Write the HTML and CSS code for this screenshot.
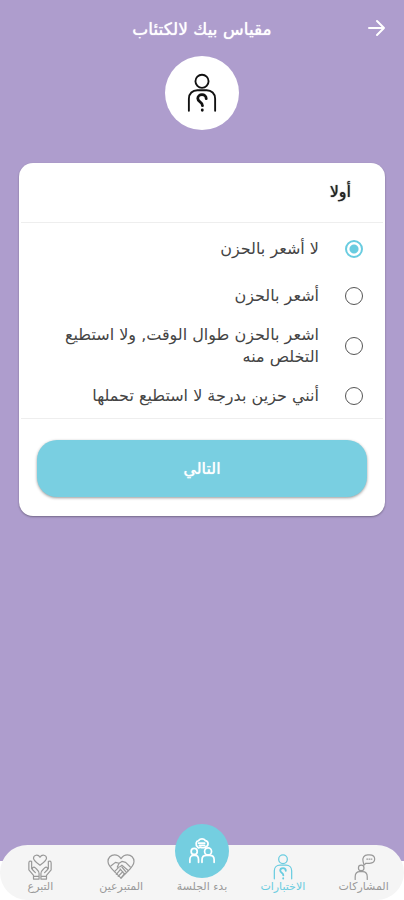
FILE: index.html
```
<!DOCTYPE html>
<html lang="ar" dir="rtl">
<head>
<meta charset="utf-8">
<meta name="viewport" content="width=device-width, initial-scale=1">
<title>مقياس بيك لالكتئاب</title>
<link rel="stylesheet" href="styles.css">
</head>
<body>
<svg class="defs" aria-hidden="true">
  <symbol id="person-question" viewBox="0 0 32 42">
    <circle cx="16" cy="8.500" r="7"/>
    <path d="M2 40V27c0-5.500 4-9 9-9h10c5 0 9 3.500 9 9v13"/>
    <path class="mark" d="M20.500 27c0-2.500-2-4.200-4.500-4.200s-4.500 1.700-4.500 4c0 4 5 3.200 5 7.700M16.300 39v.5"/>
  </symbol>
</svg>
<header class="bar">
  <button class="back" type="button" aria-label="رجوع">
    <svg viewBox="0 0 18 18"><path d="M1 9h15M9 2l7 7-7 7"/></svg>
  </button>
  <h1>مقياس بيك لالكتئاب</h1>
</header>
<main>
  <div class="avatar"><svg class="icon"><use href="#person-question"/></svg></div>
  <form class="card">
    <h2 id="question">أولا</h2>
    <div class="options" role="radiogroup" aria-labelledby="question">
      <label class="option"><input type="radio" name="answer" checked><span>لا أشعر بالحزن</span></label>
      <label class="option"><input type="radio" name="answer"><span>أشعر بالحزن</span></label>
      <label class="option"><input type="radio" name="answer"><span>اشعر بالحزن طوال الوقت, ولا استطيع التخلص منه</span></label>
      <label class="option"><input type="radio" name="answer"><span>أنني حزين بدرجة لا استطيع تحملها</span></label>
    </div>
    <div class="actions"><button class="next" type="button">التالي</button></div>
  </form>
</main>
<footer>
  <nav class="tabs">
    <a href="#posts">
      <svg class="icon" viewBox="0 0 28 28">
        <circle cx="11" cy="15" r="3"/><path d="M4.500 27.500v-3c0-3.500 2-5.500 5-5.500h3c3 0 5 2 5 5.500v3"/>
        <path d="M14 12l-1-4c-1-4 1-7 5-7h2c4 0 5.500 2 5.500 4.500S24 10 20 10h-4z"/><path d="M17 5.500h1M19.500 5.500h1M22 5.500h.5"/>
      </svg>
      <span>المشاركات</span>
    </a>
    <a href="#tests" class="active" aria-current="page">
      <svg class="icon"><use href="#person-question"/></svg>
      <span>الاختبارات</span>
    </a>
    <a href="#session">
      <span class="bubble"><svg class="icon" viewBox="0 0 30 30">
        <circle cx="6" cy="15.500" r="3.500"/><path d="M1 28v-3c0-3 2-5 4-5h2c3 0 4 2 4 5v3"/>
        <circle cx="22" cy="15.500" r="4"/><path d="M15 28v-3c0-3 2-5 5-5h4c3 0 5 2 5 5v3"/>
        <path d="M10 10.500c-3-3-2-7 1-7.500 2-2.500 6-2.500 8 0 4 1 4 6 0 7.500-2 1-4 1-6 0l-2 1z"/><path d="M11 6h7M12 8.500h6"/>
      </svg></span>
      <span>بدء الجلسة</span>
    </a>
    <a href="#donors">
      <svg class="icon" viewBox="0 0 30 28">
        <path d="M8 19C4 15 1 12 1 8c0-4 3-7 7-7 3 0 5 1 7 4 2-3 4-4 7-4 4 0 7 3 7 7 0 4-3 7-7 11l-7 7z"/>
        <path d="M4 13l5-4 4 1 3-2 4 1 5 5M13 10l-2 4c2 1 3 0 5-2l7 6M8 19l4-4M10 22l4-5M12 24l5-5M15 26l4-5M16 14l5 6M14 16l5 6"/>
      </svg>
      <span>المتبرعين</span>
    </a>
    <a href="#donate">
      <svg class="icon" viewBox="0 0 26 28">
        <path d="M13 12C9 9 6 7 6 4.500 6 1 11 0 13 3.500 15 0 20 1 20 4.500 20 7 17 9 13 12z"/>
        <path d="M4 8c-2-1-3 0-3 2v7l5 6v4h6v-6c0-3-2-4-4-6s-4 0-3 2l3 3M4 8v8M22 8c2-1 3 0 3 2v7l-5 6v4h-6v-6c0-3 2-4 4-6s4 0 3 2l-3 3M22 8v8M6 24h6M14 24h6"/>
      </svg>
      <span>التبرع</span>
    </a>
  </nav>
</footer>
</body>
</html>
```
FILE: styles.css
```
* { box-sizing: border-box; }

body {
  margin: 0;
  min-height: 100vh;
  display: flex;
  flex-direction: column;
  background: #ae9dcd;
  color: #444;
  font-family: "DejaVu Sans", sans-serif;
}

.defs { display: none; }

svg {
  fill: none;
  stroke: currentColor;
  stroke-linecap: round;
  stroke-linejoin: round;
}

button {
  border: 0;
  font: inherit;
  cursor: pointer;
}

h1,
h2,
.next {
  font-size: 16px;
  font-weight: normal;
  line-height: 24px;
  text-shadow: 0 0 1px currentColor;
}

.bar {
  display: grid;
  grid-template-columns: 54px 1fr 54px;
  align-items: center;
  height: 56px;
  color: #fff;
}

.back {
  display: grid;
  place-items: center;
  height: 48px;
  padding: 0;
  background: none;
  color: inherit;
}

.back svg {
  width: 18px;
  height: 18px;
  stroke-width: 2;
}

h1 {
  margin: 0;
  padding-top: 2px;
  font-size: 17px;
  text-align: center;
}

main {
  flex: 1;
  display: flex;
  flex-direction: column;
  gap: 33px;
  padding: 0 19px 24px;
}

.avatar {
  display: grid;
  place-items: center;
  align-self: center;
  width: 74px;
  height: 74px;
  border-radius: 50%;
  background: #fff;
  color: #111;
}

.avatar .icon {
  width: 30px;
  height: 40px;
  stroke-width: 2;
}

.mark { stroke-width: 3; }

.card {
  border-radius: 14px;
  background: #fff;
  box-shadow: 0 1px 2px #0005;
}

h2 {
  margin: 0 2px;
  padding: 17px 32px 18px;
  border-bottom: 1px solid #eee;
  color: #222;
}

.options {
  display: flex;
  flex-direction: column;
  gap: 3px;
  margin: 0 2px;
  padding: 4px 20px 0;
  border-bottom: 1px solid #eee;
}

.option {
  display: flex;
  align-items: center;
  gap: 26px;
  min-height: 44px;
  padding: 3px 0;
  font-size: 16px;
  line-height: 22px;
}

.option input {
  appearance: none;
  flex: none;
  width: 18px;
  height: 18px;
  margin: 0;
  border: 1px solid #555;
  border-radius: 50%;
}

.option input:checked {
  border: 2px solid #69cce0;
  background: radial-gradient(circle, #69cce0 4px, transparent 5px);
}

.actions { padding: 21px 18px 19px; }

.next {
  display: block;
  width: 100%;
  height: 57px;
  border-radius: 20px;
  background: #79cfe1;
  box-shadow: 0 1px 3px #0006;
  color: #fff;
}

footer { background: linear-gradient(#ae9dcd 16px, #fff 16px); }

.tabs {
  display: grid;
  grid-template: 55px / repeat(5, 1fr);
  border-radius: 28px;
  background: #f5f5f5;
}

.tabs a {
  display: flex;
  flex-direction: column;
  align-items: center;
  justify-content: flex-end;
  padding-bottom: 6px;
  color: #999;
  font-size: 11px;
  line-height: 14px;
  text-decoration: none;
  white-space: nowrap;
}

.tabs .icon {
  width: 28px;
  height: 26px;
  stroke-width: 1.3;
}

.tabs .active { color: #69cce0; }
.tabs .active .icon { stroke-width: 2; }

.tabs .bubble {
  display: grid;
  flex: none;
  place-items: center;
  width: 54px;
  height: 54px;
  margin-bottom: 2px;
  border-radius: 50%;
  background: #74cee0;
  color: #fff;
}

.tabs .bubble .icon { stroke-width: 2; }
```
